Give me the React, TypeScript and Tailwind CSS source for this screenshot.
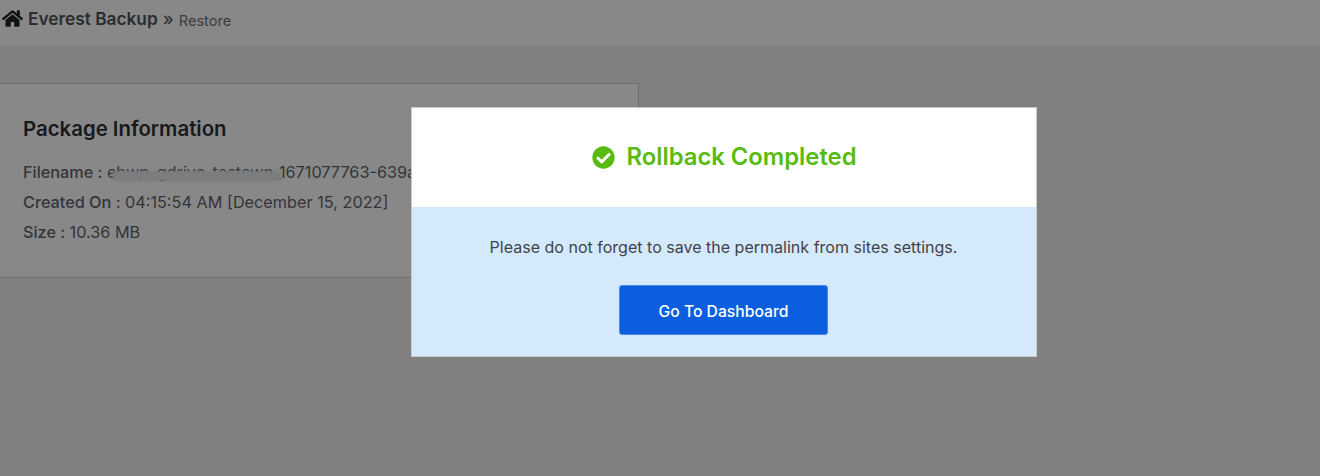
import { FaHome, FaCheckCircle } from 'react-icons/fa';

export default function App() {
  return (
    <div className="relative h-[476px] w-[1320px] overflow-hidden bg-[#808080] font-['Inter',sans-serif]">
      {/* Top bar */}
      <div className="flex h-[46px] items-start bg-[#888888] pl-[2px] pt-[8px]">
        <FaHome className="h-[21px] w-[21px] text-[#111214]" />
        <span className="ml-[5px] text-[17.3px] leading-[22px] font-semibold text-[#2a2c30]">Everest Backup</span>
        <span className="ml-[5px] text-[18px] leading-[22px] font-medium text-[#33353a]">»</span>
        <span className="ml-[5px] pt-[2px] text-[14.6px] leading-[22px] text-[#3a3c40]">Restore</span>
      </div>

      {/* Package card */}
      <div className="mt-[37px] h-[195px] w-[639px] border border-l-0 border-[#6e6e6e] bg-[#888888] pl-[23px] pt-[32px]">
        <h2 className="text-[20.4px] leading-[26px] font-semibold text-[#18191b]">Package Information</h2>
        <div className="mt-[19px] flex flex-col gap-[8px] text-[16.25px] leading-[22px] text-[#333538]">
          <p className="relative whitespace-nowrap">
            <span className="font-medium">Filename : </span>ehwp_gdrive_testown_1671077763-639a
            <span className="absolute left-[90px] top-[10px] h-[10px] w-[167px] bg-[#7c7d7e] blur-[1px]" />
          </p>
          <p>
            <span className="font-medium">Created On : </span>04:15:54 AM [December 15, 2022]
          </p>
          <p>
            <span className="font-medium">Size : </span>10.36 MB
          </p>
        </div>
      </div>

      {/* Modal */}
      <div className="absolute left-[411px] top-[107px] w-[626px] border border-[#c8c8c8] bg-white">
        <div className="flex h-[99px] items-center justify-center gap-[11px] pl-[1px]">
          <FaCheckCircle className="h-[23px] w-[23px] text-[#58bb12]" />
          <span className="-mt-[2px] text-[23.8px] leading-[30px] font-semibold text-[#58bb12]">Rollback Completed</span>
        </div>
        <div className="flex h-[149px] flex-col items-center bg-[#d5e9fd] pr-[1px] pt-[29px]">
          <p className="text-[16.05px] leading-[22px] text-[#3f4349]">Please do not forget to save the permalink from sites settings.</p>
          <button className="mt-[27px] flex h-[50px] w-[209px] items-center justify-center rounded-[3px] border border-[#4a8ae6] bg-[#0b5fdf] pt-[3px] text-[15.7px] font-medium text-white">
            Go To Dashboard
          </button>
        </div>
      </div>
    </div>
  );
}
